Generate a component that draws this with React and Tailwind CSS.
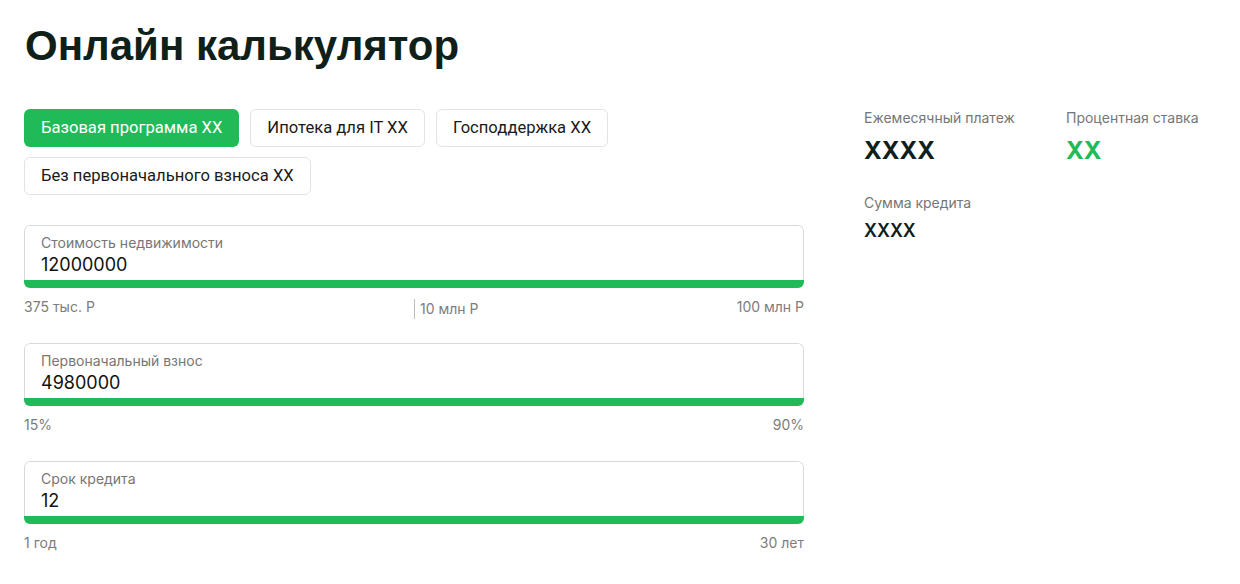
import React from "react";

const tabs = [
  ["Базовая программа XX", true],
  ["Ипотека для IT XX", false],
  ["Господдержка XX", false],
  ["Без первоначального взноса XX", false],
];

function Field({ label, value, left, right, mid }) {
  return (
    <div>
      <div className="rounded-[6px] overflow-hidden">
        <div className="border border-b-0 border-[#d9d9d9] rounded-t-[6px] px-4 pt-[7px] pb-[3px]">
          <div className="text-[14px] leading-[20px] text-[#767676]">{label}</div>
          <div className="text-[18px] leading-[24px] text-[#111]">{value}</div>
        </div>
        <div className="h-2 bg-[#21ba58]" />
      </div>
      <div className="relative mt-[9px] h-5 flex justify-between text-[14px] leading-[20px] text-[#7d7d7d]">
        <span>{left}</span>
        {mid && (
          <span className="absolute left-1/2 top-[2px] border-l border-[#bdbdbd] pl-[5px]">{mid}</span>
        )}
        <span>{right}</span>
      </div>
    </div>
  );
}

export default function App() {
  return (
    <div className="min-h-[584px] bg-white px-6 pt-[21px]" style={{ fontFamily: "Inter, 'Noto Sans', sans-serif" }}>
      <h1
        className="text-[42px] leading-[50px] font-bold text-[#0f1f1a] pl-px"
        style={{ fontFamily: "'Liberation Sans', Arial, sans-serif" }}
      >
        Онлайн калькулятор
      </h1>
      <div className="mt-[38px] flex items-start">
        <div className="w-[780px] shrink-0">
          <div className="flex flex-wrap gap-y-[10px] gap-x-[11px] w-[600px]" style={{ fontFamily: "Roboto, sans-serif" }}>
            {tabs.map(([t, a]) => (
              <div
                key={t}
                className={
                  a
                    ? "h-[38px] px-[17px] flex items-center rounded-[6px] bg-[#21ba58] text-white text-[16.6px]"
                    : "h-[38px] px-4 flex items-center rounded-[6px] border border-[#e3e3e3] text-[#1a1a1a] text-[16.6px]"
                }
              >
                {t}
              </div>
            ))}
          </div>
          <div className="mt-[30px] flex flex-col gap-[26px]">
            <Field label="Стоимость недвижимости" value="12000000" left="375 тыс. Р" mid="10 млн Р" right="100 млн Р" />
            <Field label="Первоначальный взнос" value="4980000" left="15%" right="90%" />
            <Field label="Срок кредита" value="12" left="1 год" right="30 лет" />
          </div>
        </div>
        <div className="ml-[60px] shrink-0 grid grid-cols-[202px_202px] gap-y-[26px] -mt-[1px]">
          <div>
            <div className="text-[14px] leading-[20px] text-[#767676]">Ежемесячный платеж</div>
            <div className="mt-[7px] text-[24px] leading-[32px] font-bold text-[#0f1f1a]">XXXX</div>
          </div>
          <div>
            <div className="text-[14px] leading-[20px] text-[#767676]">Процентная ставка</div>
            <div className="mt-[7px] text-[24px] leading-[32px] font-bold text-[#21ba58]">XX</div>
          </div>
          <div>
            <div className="text-[14px] leading-[20px] text-[#767676]">Сумма кредита</div>
            <div className="mt-[6px] text-[18px] leading-[24px] font-semibold text-[#0f1f1a]">XXXX</div>
          </div>
        </div>
      </div>
    </div>
  );
}
